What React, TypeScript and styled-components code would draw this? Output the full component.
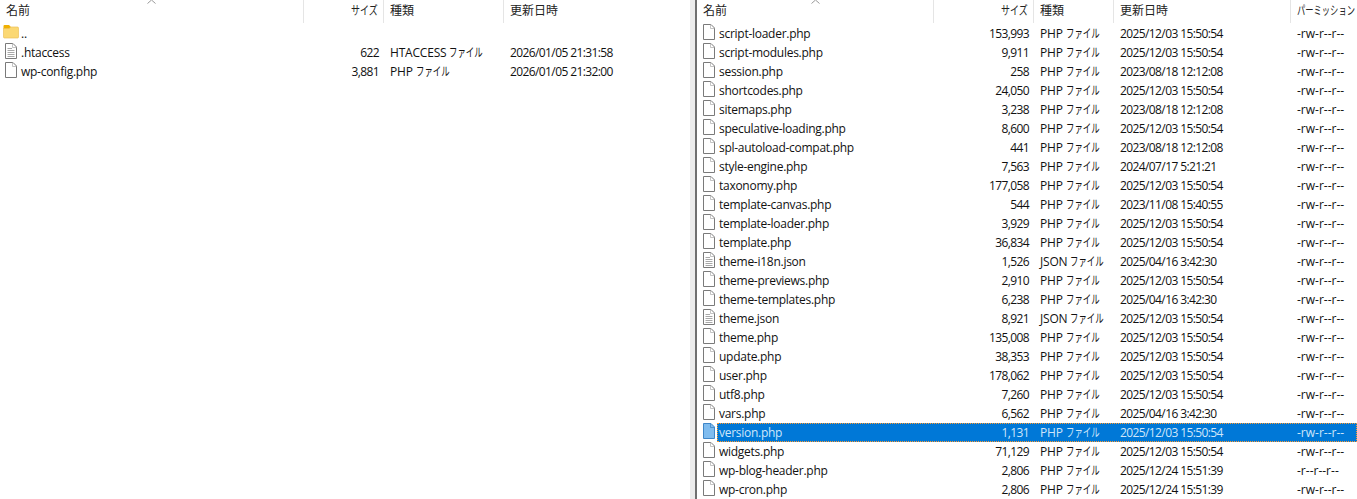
import React from 'react';
import styled, { createGlobalStyle } from 'styled-components';

const GlobalStyle = createGlobalStyle`
  html, body {
    margin: 0;
    padding: 0;
    background: #fff;
    overflow: hidden;
  }
  body {
    font-family: 'Open Sans', 'Noto Sans CJK JP', sans-serif;
    font-size: 12px;
    color: #111;
  }
`;

const Window = styled.div`
  display: flex;
  width: 1357px;
  height: 499px;
  overflow: hidden;
`;

const Pane = styled.div<{ $width: number }>`
  width: ${(p) => p.$width}px;
  flex: none;
  overflow: hidden;
`;

const Splitter = styled.div`
  width: 7px;
  margin-left: 6px;
  flex: none;
  box-sizing: border-box;
  background: #ececec;
  border-right: 2px solid #707070;
`;

const HeaderRow = styled.div<{ $cols: string }>`
  position: relative;
  display: grid;
  grid-template-columns: ${(p) => p.$cols};
  height: 23px;
`;

const HeaderCell = styled.div<{ $right?: boolean }>`
  display: flex;
  align-items: center;
  justify-content: ${(p) => (p.$right ? 'flex-end' : 'flex-start')};
  padding: 0 5px 3px 6px;
  border-right: 1px solid #e5e5e5;
  color: #222;
  white-space: nowrap;
  &:last-of-type {
    border-right: none;
  }
`;

const SortArrow = styled.svg<{ $left: number }>`
  position: absolute;
  top: 0;
  left: ${(p) => p.$left}px;
  width: 9px;
  height: 4px;
`;

// the katakana in the reference comes from a much narrower UI font
const Kana = styled.span<{ $chars: number; $scale: number }>`
  display: inline-block;
  width: ${(p) => p.$chars * 12 * p.$scale}px;
  letter-spacing: 0;
  white-space: nowrap;
  transform: scaleX(${(p) => p.$scale});
  transform-origin: left center;
`;

const Rows = styled.div`
  padding-top: 1px;
`;

const Row = styled.div<{ $cols: string }>`
  display: grid;
  grid-template-columns: ${(p) => p.$cols};
  height: 19px;
  line-height: 19px;
`;

const NameCell = styled.div<{ $inset: number }>`
  display: flex;
  align-items: flex-start;
  padding-left: ${(p) => p.$inset}px;
  min-width: 0;
`;

const IconSlot = styled.div`
  width: 16px;
  height: 16px;
  flex: none;
  margin-right: 1px;
`;

const NameLabel = styled.span`
  padding: 0 1px;
  white-space: nowrap;
  letter-spacing: -0.27px;
`;

const SizeCell = styled.div`
  text-align: right;
  padding-right: 5px;
  white-space: nowrap;
  letter-spacing: -0.6px;
`;

const TypeCell = styled.div`
  padding-left: 6px;
  white-space: nowrap;
  letter-spacing: -0.2px;
`;

const DateCell = styled.div`
  padding-left: 6px;
  white-space: nowrap;
  letter-spacing: -0.6px;
`;

const PermCell = styled.div`
  padding-left: 6px;
  white-space: nowrap;
`;

const SelectedRow = styled.div`
  display: flex;
  height: 19px;
`;

const SelectedIcon = styled.div`
  width: 16px;
  height: 16px;
  flex: none;
  margin-left: 4px;
`;

const SelectionBar = styled.div<{ $cols: string }>`
  flex: 1;
  display: grid;
  grid-template-columns: ${(p) => p.$cols};
  height: 19px;
  line-height: 17px;
  box-sizing: border-box;
  background: #0078d7;
  border: 1px dotted #ff9a2e;
  color: #cfe6fa;
`;

type Kind = 'folder' | 'text' | 'file';
type Entry = { name: string; size?: string; type?: string; date?: string; perm?: string; kind: Kind };

function FileIcon({ kind, selected }: { kind: Kind; selected?: boolean }) {
  if (kind === 'folder') {
    return (
      <svg width="16" height="16" viewBox="0 0 16 16">
        <path d="M0.5 2 Q0.5 1 1.5 1 H6 L8 3 H15 V5 H0.5 Z" fill="#f0b000" />
        <path d="M0.5 4.5 H6 L8 3 H14.5 Q15.5 3 15.5 4 V13 Q15.5 14 14.5 14 H1.5 Q0.5 14 0.5 13 Z" fill="#fbd873" stroke="#edc15a" strokeWidth="0.7" />
      </svg>
    );
  }
  const stroke = selected ? '#3f86c8' : '#7a7a7a';
  const fill = selected ? '#7fbcef' : '#fff';
  return (
    <svg width="16" height="16" viewBox="0 0 16 16">
      <path d="M2.5 0.5 H10 L13.5 4 V15.5 H2.5 Z" fill={fill} stroke={stroke} />
      <path d="M9.5 0.5 V4.5 H13.5" fill="none" stroke={selected ? '#3f86c8' : '#b5b5b5'} strokeWidth="0.8" />
      {kind === 'text' && (
        <path d="M4.5 5.5 H9 M4.5 7.5 H11.5 M4.5 9.5 H11.5 M4.5 11.5 H11.5 M4.5 13.5 H11.5" stroke="#a8a8a8" strokeWidth="1" />
      )}
    </svg>
  );
}

const R = '-rw-r--r--';
const A = '2025/12/03 15:50:54';
const B = '2023/08/18 12:12:08';
const C = '2025/04/16 3:42:30';

const leftEntries: Entry[] = [
  { name: '..', kind: 'folder' },
  { name: '.htaccess', size: '622', type: 'HTACCESS', date: '2026/01/05 21:31:58', kind: 'text' },
  { name: 'wp-config.php', size: '3,881', type: 'PHP', date: '2026/01/05 21:32:00', kind: 'file' },
];

const rightEntries: Entry[] = [
  { name: 'script-loader.php', size: '153,993', type: 'PHP', date: A, perm: R, kind: 'file' },
  { name: 'script-modules.php', size: '9,911', type: 'PHP', date: A, perm: R, kind: 'file' },
  { name: 'session.php', size: '258', type: 'PHP', date: B, perm: R, kind: 'file' },
  { name: 'shortcodes.php', size: '24,050', type: 'PHP', date: A, perm: R, kind: 'file' },
  { name: 'sitemaps.php', size: '3,238', type: 'PHP', date: B, perm: R, kind: 'file' },
  { name: 'speculative-loading.php', size: '8,600', type: 'PHP', date: A, perm: R, kind: 'file' },
  { name: 'spl-autoload-compat.php', size: '441', type: 'PHP', date: B, perm: R, kind: 'file' },
  { name: 'style-engine.php', size: '7,563', type: 'PHP', date: '2024/07/17 5:21:21', perm: R, kind: 'file' },
  { name: 'taxonomy.php', size: '177,058', type: 'PHP', date: A, perm: R, kind: 'file' },
  { name: 'template-canvas.php', size: '544', type: 'PHP', date: '2023/11/08 15:40:55', perm: R, kind: 'file' },
  { name: 'template-loader.php', size: '3,929', type: 'PHP', date: A, perm: R, kind: 'file' },
  { name: 'template.php', size: '36,834', type: 'PHP', date: A, perm: R, kind: 'file' },
  { name: 'theme-i18n.json', size: '1,526', type: 'JSON', date: C, perm: R, kind: 'text' },
  { name: 'theme-previews.php', size: '2,910', type: 'PHP', date: A, perm: R, kind: 'file' },
  { name: 'theme-templates.php', size: '6,238', type: 'PHP', date: C, perm: R, kind: 'file' },
  { name: 'theme.json', size: '8,921', type: 'JSON', date: A, perm: R, kind: 'text' },
  { name: 'theme.php', size: '135,008', type: 'PHP', date: A, perm: R, kind: 'file' },
  { name: 'update.php', size: '38,353', type: 'PHP', date: A, perm: R, kind: 'file' },
  { name: 'user.php', size: '178,062', type: 'PHP', date: A, perm: R, kind: 'file' },
  { name: 'utf8.php', size: '7,260', type: 'PHP', date: A, perm: R, kind: 'file' },
  { name: 'vars.php', size: '6,562', type: 'PHP', date: C, perm: R, kind: 'file' },
  { name: 'version.php', size: '1,131', type: 'PHP', date: A, perm: R, kind: 'file' },
  { name: 'widgets.php', size: '71,129', type: 'PHP', date: A, perm: R, kind: 'file' },
  { name: 'wp-blog-header.php', size: '2,806', type: 'PHP', date: '2025/12/24 15:51:39', perm: '-r--r--r--', kind: 'file' },
  { name: 'wp-cron.php', size: '2,806', type: 'PHP', date: '2025/12/24 15:51:39', perm: R, kind: 'file' },
];

const leftCols = '304px 80px 120px 180px';
const rightCols = '237px 100px 80px 177px 1fr';
const selectedCols = '216px 100px 80px 177px 1fr';

function TypeLabel({ type }: { type?: string }) {
  if (!type) return <TypeCell />;
  return (
    <TypeCell>
      {type}{' '}
      <Kana $chars={4} $scale={0.7}>
        ファイル
      </Kana>
    </TypeCell>
  );
}

export default function App() {
  return (
    <Window>
      <GlobalStyle />
      <Pane $width={684}>
        <HeaderRow $cols={leftCols}>
          <HeaderCell>名前</HeaderCell>
          <HeaderCell $right>
            <Kana $chars={3} $scale={0.75}>
              サイズ
            </Kana>
          </HeaderCell>
          <HeaderCell>種類</HeaderCell>
          <HeaderCell>更新日時</HeaderCell>
          <SortArrow $left={147} viewBox="0 0 9 4">
            <path d="M0.5 3.5 L4.5 0 L8.5 3.5" fill="none" stroke="#9a9a9a" />
          </SortArrow>
        </HeaderRow>
        <Rows>
          {leftEntries.map((e) => (
            <Row key={e.name} $cols={leftCols}>
              <NameCell $inset={3}>
                <IconSlot>
                  <FileIcon kind={e.kind} />
                </IconSlot>
                <NameLabel>{e.name}</NameLabel>
              </NameCell>
              <SizeCell>{e.size}</SizeCell>
              <TypeLabel type={e.type} />
              <DateCell>{e.date}</DateCell>
            </Row>
          ))}
        </Rows>
      </Pane>
      <Splitter />
      <Pane $width={660}>
        <HeaderRow $cols={rightCols}>
          <HeaderCell>名前</HeaderCell>
          <HeaderCell $right>
            <Kana $chars={3} $scale={0.75}>
              サイズ
            </Kana>
          </HeaderCell>
          <HeaderCell>種類</HeaderCell>
          <HeaderCell>更新日時</HeaderCell>
          <HeaderCell>
            <Kana $chars={7} $scale={0.69}>
              パーミッション
            </Kana>
          </HeaderCell>
          <SortArrow $left={114} viewBox="0 0 9 4">
            <path d="M0.5 3.5 L4.5 0 L8.5 3.5" fill="none" stroke="#9a9a9a" />
          </SortArrow>
        </HeaderRow>
        <Rows>
          {rightEntries.map((e) =>
            e.name === 'version.php' ? (
              <SelectedRow key={e.name}>
                <SelectedIcon>
                  <FileIcon kind={e.kind} selected />
                </SelectedIcon>
                <SelectionBar $cols={selectedCols}>
                  <NameLabel>{e.name}</NameLabel>
                  <SizeCell>{e.size}</SizeCell>
                  <TypeLabel type={e.type} />
                  <DateCell>{e.date}</DateCell>
                  <PermCell>{e.perm}</PermCell>
                </SelectionBar>
              </SelectedRow>
            ) : (
              <Row key={e.name} $cols={rightCols}>
                <NameCell $inset={4}>
                  <IconSlot>
                    <FileIcon kind={e.kind} />
                  </IconSlot>
                  <NameLabel>{e.name}</NameLabel>
                </NameCell>
                <SizeCell>{e.size}</SizeCell>
                <TypeLabel type={e.type} />
                <DateCell>{e.date}</DateCell>
                <PermCell>{e.perm}</PermCell>
              </Row>
            )
          )}
        </Rows>
      </Pane>
    </Window>
  );
}
